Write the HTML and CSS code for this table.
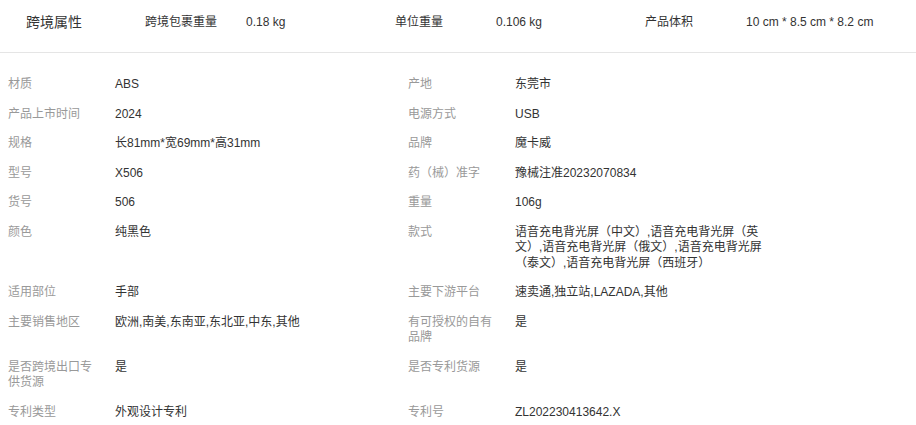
FILE: index.html
```html
<!DOCTYPE html>
<html lang="zh-CN">
<head>
<meta charset="UTF-8">
<meta name="viewport" content="width=device-width, initial-scale=1.0">
<title>商品属性</title>
<link rel="stylesheet" href="styles.css">
</head>
<body>

<div class="cross-border">
    <div class="cross-title">跨境属性</div>
    <div class="cross-item">
        <span class="cross-label">跨境包裹重量</span>
        <span class="cross-value">0.18 kg</span>
    </div>
    <div class="cross-item">
        <span class="cross-label">单位重量</span>
        <span class="cross-value">0.106 kg</span>
    </div>
    <div class="cross-item">
        <span class="cross-label">产品体积</span>
        <span class="cross-value">10 cm * 8.5 cm * 8.2 cm</span>
    </div>
</div>

<div class="attr-grid">
    <div class="attr-label">材质</div>
    <div class="attr-value">ABS</div>
    <div class="attr-label">产地</div>
    <div class="attr-value">东莞市</div>

    <div class="attr-label">产品上市时间</div>
    <div class="attr-value">2024</div>
    <div class="attr-label">电源方式</div>
    <div class="attr-value">USB</div>

    <div class="attr-label">规格</div>
    <div class="attr-value">长81mm*宽69mm*高31mm</div>
    <div class="attr-label">品牌</div>
    <div class="attr-value">魔卡威</div>

    <div class="attr-label">型号</div>
    <div class="attr-value">X506</div>
    <div class="attr-label">药（械）准字</div>
    <div class="attr-value">豫械注准20232070834</div>

    <div class="attr-label">货号</div>
    <div class="attr-value">506</div>
    <div class="attr-label">重量</div>
    <div class="attr-value">106g</div>

    <div class="attr-label">颜色</div>
    <div class="attr-value">纯黑色</div>
    <div class="attr-label">款式</div>
    <div class="attr-value">语音充电背光屏（中文）,语音充电背光屏（英文）,语音充电背光屏（俄文）,语音充电背光屏（泰文）,语音充电背光屏（西班牙）</div>

    <div class="attr-label">适用部位</div>
    <div class="attr-value">手部</div>
    <div class="attr-label">主要下游平台</div>
    <div class="attr-value">速卖通,独立站,LAZADA,其他</div>

    <div class="attr-label">主要销售地区</div>
    <div class="attr-value">欧洲,南美,东南亚,东北亚,中东,其他</div>
    <div class="attr-label">有可授权的自有品牌</div>
    <div class="attr-value">是</div>

    <div class="attr-label">是否跨境出口专供货源</div>
    <div class="attr-value">是</div>
    <div class="attr-label">是否专利货源</div>
    <div class="attr-value">是</div>

    <div class="attr-label">专利类型</div>
    <div class="attr-value">外观设计专利</div>
    <div class="attr-label">专利号</div>
    <div class="attr-value">ZL202230413642.X</div>
</div>

</body>
</html>
```

FILE: styles.css
```css
body {
    font-family: "Liberation Sans", Arial, "Noto Sans CJK SC", sans-serif;
    font-size: 12px;
    color: #333;
    background-color: #fff;
    margin: 0;
    padding: 0;
}
.cross-border {
    display: flex;
    align-items: center;
    padding: 12px 0 20px;
    line-height: 20px;
    border-bottom: 1px solid #e5e5e5;
}
.cross-title {
    width: 145px;
    box-sizing: border-box;
    padding-left: 26px;
    font-size: 14px;
    color: #333;
}
.cross-item {
    display: flex;
    width: 250px;
}
.cross-label {
    width: 101px;
    color: #333;
}
.cross-value {
    color: #333;
}
.attr-grid {
    display: grid;
    grid-template-columns: 107px 293px 107px 250px;
    row-gap: 14px;
    padding: 24px 0 0 8px;
    line-height: 15.5px;
}
.attr-label {
    color: #999;
    padding-right: 15px;
}
.attr-value {
    color: #333;
}
```
